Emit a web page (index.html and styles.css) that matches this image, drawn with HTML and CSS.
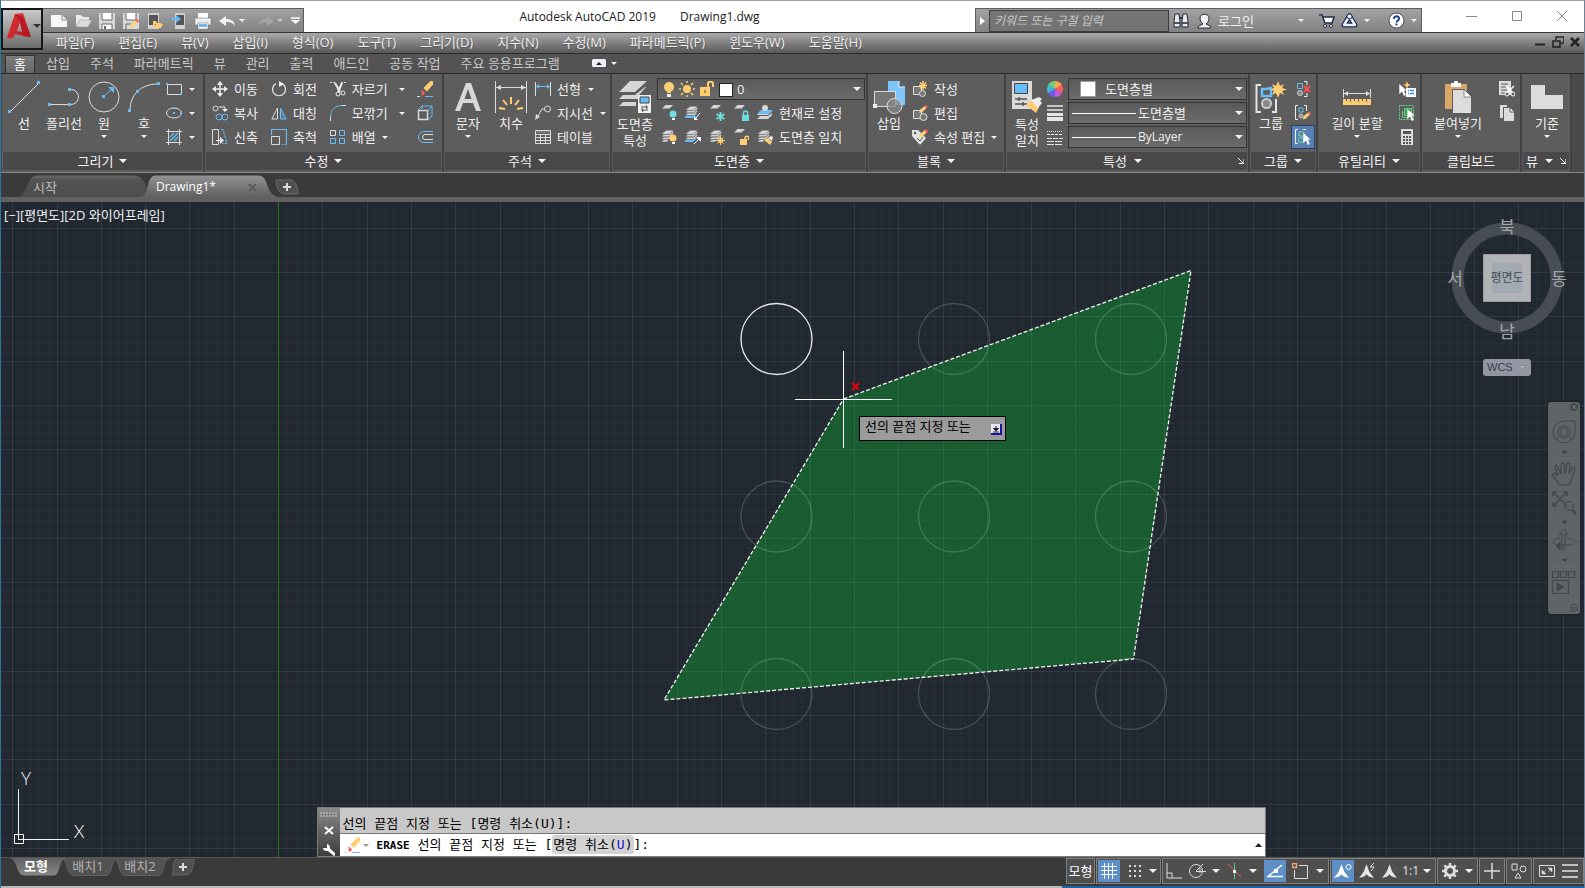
FILE: index.html
```html
<!DOCTYPE html>
<html lang="ko">
<head>
<meta charset="utf-8">
<title>Autodesk AutoCAD 2019 - Drawing1.dwg</title>
<link rel="stylesheet" href="styles.css">
</head>
<body>
<svg class="defs" width="0" height="0" aria-hidden="true">
  <defs>
    <linearGradient id="red" x1="0" y1="0" x2="1" y2="1"><stop offset="0" stop-color="#f0474a"/><stop offset="1" stop-color="#a3121a"/></linearGradient>
    <linearGradient id="tabOff" x1="0" y1="0" x2="0" y2="1"><stop offset="0" stop-color="#686868"/><stop offset=".2" stop-color="#545454"/><stop offset="1" stop-color="#4c4c4c"/></linearGradient>
    <linearGradient id="tabOn" x1="0" y1="0" x2="0" y2="1"><stop offset="0" stop-color="#929292"/><stop offset="1" stop-color="#616161"/></linearGradient>
    <linearGradient id="lowOn" x1="0" y1="0" x2="0" y2="1"><stop offset="0" stop-color="#606060"/><stop offset="1" stop-color="#868686"/></linearGradient>
    <symbol id="pencil" viewBox="0 0 10 10"><path d="M1 9l1-4 5-4 2 2-5 5z" fill="#ffd37a"/><path d="M6 1l2-1 2 2-1 2z" fill="#ff5b5b"/></symbol>
    <symbol id="eraser" viewBox="0 0 16 16"><path d="M13 0h3v4l-7 8-4-4z" fill="#ffce73"/><path d="M3 10l4 4-2 2H3v-4z" fill="#ff5b5b"/></symbol>
    <symbol id="sheet" viewBox="0 0 16 16"><path d="M5 1h10l-5 5H0z" fill="#d6d6d6"/></symbol>
    <symbol id="sheets" viewBox="0 0 16 16"><path d="M6 1h8l-4 4H1z M3 6h7l4-4v2l-4 4H1z M3 9h7l4-4v2l-4 4H1z M3 12h5l-1 2H1z" fill="#d6d6d6"/></symbol>
    <symbol id="cursor" viewBox="0 0 8 13"><path d="M0 0v11l3-3 2 5 2-1-2-5h3z" fill="#fff"/></symbol>
    <symbol id="man" viewBox="0 0 20 20"><path d="M10 0c2 4 2 6 4 10l6 8-7-2-3-3-3 3-7 2 6-8c2-4 2-6 4-10z" fill="currentColor"/></symbol>
  </defs>
</svg>

<header class="titlebar">
  <div class="quick">
    <button class="q" aria-label="새로 만들기"><svg width="16" height="14"><path d="M0 1h11l5 5v7H0z" fill="#f7f7f7"/><path d="M11 1v5h5" fill="none" stroke="#888"/></svg></button>
    <button class="q" aria-label="열기"><svg width="17" height="14"><path d="M1 13V1h5l2 2h6v3" fill="#e9e9e9"/><path d="M1 13l4-7h12l-4 7z" fill="#ddd" stroke="#888" stroke-width=".5"/></svg></button>
    <button class="q" aria-label="저장"><svg width="16" height="16"><path d="M0 0h16v16H0z" fill="#d8d8d8"/><path d="M3 0h10v7H3zM3 11h10v5H3z" fill="#fff"/><path d="M3 0v7h10V0M3 16v-5h10v5" stroke="#666" fill="none"/><path d="M5 13h2v3H5z" fill="#666"/></svg></button>
    <button class="q" aria-label="다른 이름으로 저장"><svg width="16" height="16"><path d="M0 0h16v16H0z" fill="#d8d8d8"/><path d="M3 0h10v7H3z" fill="#fff"/><path d="M3 0v7h10V0M3 16v-5h5" stroke="#666" fill="none"/><use href="#pencil" x="6" y="6" width="10" height="10"/></svg></button>
    <button class="q" aria-label="모바일에서 열기"><svg width="16" height="16"><path d="M1 0h11v16H1z" fill="#d0d0d0"/><path d="M2 2h9v10H2z" fill="#555"/><path d="M7 15l2-4h7l-2 4z M6 15V8h3l1 2h4v1H8z" fill="#ffcd73"/></svg></button>
    <button class="q" aria-label="모바일에 저장"><svg width="16" height="16"><path d="M4 0h10v16H4z" fill="#d0d0d0"/><path d="M5 2h8v10H5z" fill="#555"/><path d="M0 5h5V2l5 4-5 4V7H0z" fill="#67b8f2"/></svg></button>
    <button class="q" aria-label="플롯"><svg width="17" height="16"><path d="M3 0h10v5H3z" fill="#fff"/><path d="M0 5h16v7H0z" fill="#eee" stroke="#666" stroke-width=".5"/><path d="M3 10h10v6H3z" fill="#fff" stroke="#666" stroke-width=".5"/><path d="M4 11h8v3H4z" fill="#6bb9f0"/></svg></button>
    <button class="q" aria-label="명령 취소"><svg width="16" height="12"><path d="M0 6l7-5v3c6 0 8 2 9 7-2-3-4-4-9-4v4z" fill="#f2f2f2"/></svg></button>
    <i class="caret"></i>
    <button class="q redo" aria-label="명령 복구"><svg width="16" height="12"><path d="M16 6L9 1v3C3 4 1 6 0 11c2-3 4-4 9-4v4z" fill="#b4b4b4"/></svg></button>
    <i class="caret faded"></i>
    <button class="custom" aria-label="사용자화"><svg width="9" height="8"><path d="M0 1h9" stroke="#fff" stroke-width="1.5"/><path d="M0 3h9L4.500 7z" fill="#fff"/></svg></button>
  </div>
  <h1 class="title"><span>Autodesk AutoCAD 2019</span><span>Drawing1.dwg</span></h1>
  <div class="info">
    <button class="expand" aria-label="축소"><svg width="5" height="8"><path d="M0 0l5 4-5 4z" fill="#fff"/></svg></button>
    <input class="search" type="text" placeholder="키워드 또는 구절 입력" aria-label="키워드 또는 구절 입력">
    <button aria-label="검색"><svg width="16" height="15"><path d="M2 1h4l1 7v6H1V8z M10 1h4l1 7v6H9V8z" fill="#e8e8e8" stroke="#222a38"/><path d="M6 5h4M1 10h6M9 10h6" stroke="#222a38" stroke-width="1.500"/></svg></button>
    <button class="login"><svg width="16" height="16"><path d="M1 15c0-3 4-3 5-4-2-2-3-3-3-6 0-5 9-5 9 0 0 3-1 4-3 6 1 1 5 1 5 4z" fill="#f2f2f2" stroke="#222a38"/></svg><span>로그인</span><i class="caret"></i></button>
    <button aria-label="앱 스토어"><svg width="17" height="16"><path d="M1 2h3l3 8h7l2-6H5" fill="#fff" stroke="#1f2c4c" stroke-width="1.500"/><circle cx="7" cy="13" r="1.500" fill="#fff" stroke="#1f2c4c"/><circle cx="13" cy="13" r="1.500" fill="#fff" stroke="#1f2c4c"/></svg></button>
    <button aria-label="연결 유지"><svg width="17" height="15"><path d="M8.500 3L3 12h11z" fill="none" stroke="#1f2c4c" stroke-width="5" stroke-linejoin="round"/><path d="M8.500 3L3 12h11z" fill="none" stroke="#e8ecf4" stroke-width="2.500" stroke-linejoin="round"/><circle cx="8.500" cy="3.500" r="2.500" fill="#e8ecf4" stroke="#1f2c4c"/></svg></button>
    <i class="caret"></i>
    <button class="help" aria-label="도움말"><svg width="17" height="17"><circle cx="8.500" cy="8.500" r="7.500" fill="#fff" stroke="#4a4a4a"/><path d="M6 7c0-4 5.500-3.500 5 0-.3 1.700-2.500 1.500-2.500 3.500M8.500 11.500v2" fill="none" stroke="#1b3d99" stroke-width="2"/></svg></button>
    <i class="caret"></i>
  </div>
  <div class="winctl">
    <button aria-label="최소화"><svg width="12" height="12"><path d="M0 6.500h11" stroke="#888"/></svg></button>
    <button aria-label="최대화"><svg width="12" height="12"><path d="M1.500 1.500h9v9h-9z" stroke="#888" fill="none"/></svg></button>
    <button aria-label="닫기"><svg width="12" height="12"><path d="M1 1l10 10M11 1L1 11" stroke="#888"/></svg></button>
  </div>
</header>
<button class="appbtn" aria-label="응용프로그램 메뉴"><svg width="24" height="28"><path d="M8 2l8-1 8 24-8-1-3-14-3 9 6 1 1 4-9-2-2 4-6 1z" fill="url(#red)"/><path d="M8 2L0 26l6 0 7-17z" fill="#cf2a2f"/><path d="M8 2l5 7 3 15 7 1-7-20z" fill="#b9181f"/></svg><i class="caret dark"></i></button>

<nav class="menubar">
  <a href="#">파일(F)</a><a href="#">편집(E)</a><a href="#">뷰(V)</a><a href="#">삽입(I)</a><a href="#">형식(O)</a><a href="#">도구(T)</a><a href="#">그리기(D)</a><a href="#">치수(N)</a><a href="#">수정(M)</a><a href="#">파라메트릭(P)</a><a href="#">윈도우(W)</a><a href="#">도움말(H)</a>
  <div class="docctl">
    <button aria-label="도면 최소화"><svg width="12" height="12"><path d="M1 8.500h10" stroke="#222" stroke-width="2"/></svg></button>
    <button aria-label="도면 복원"><svg width="12" height="12"><path d="M4 4V1h8v6H9" fill="none" stroke="#222" stroke-width="1.500"/><path d="M1 5h7v6H1z" fill="none" stroke="#222" stroke-width="1.500"/></svg></button>
    <button aria-label="도면 닫기"><svg width="10" height="10"><path d="M1 1l8 8M9 1L1 9" stroke="#222" stroke-width="2.500"/></svg></button>
  </div>
</nav>

<nav class="tabs">
  <button class="on">홈</button><button>삽입</button><button>주석</button><button>파라메트릭</button><button>뷰</button><button>관리</button><button>출력</button><button>애드인</button><button>공동 작업</button><button>주요 응용프로그램</button>
  <button class="mini" aria-label="리본 최소화"><svg width="14" height="8"><rect width="14" height="8" rx="1.500" fill="#eef1f6"/><path d="M4 6l3-3 3 3z" fill="#222"/></svg><i class="caret"></i></button>
</nav>

<main class="ribbon">
  <section class="panel p-draw">
    <div class="body">
      <button class="big"><svg width="32" height="34"><path d="M2 31L31 2" stroke="#dcdcdc"/><path d="M0 29h3v3H0zM29 0h3v3h-3z" fill="#67bdf7"/></svg>선</button>
      <button class="big"><svg width="34" height="34"><path d="M2 23.500h20M22 8.500h2a7.500 7.500 0 0 1 0 15h-2" stroke="#dcdcdc" fill="none"/><path d="M1 22h3v3H1zM21 7h3v3h-3zM21 22h3v3h-3z" fill="#67bdf7"/></svg>폴리선</button>
      <button class="big"><svg width="32" height="34"><circle cx="16" cy="16" r="15" stroke="#dcdcdc" fill="none"/><path d="M14 14h3v3h-3zM20 6h6v6z" fill="#67bdf7"/><path d="M16 15l8-7" stroke="#67bdf7"/></svg>원<i class="caret"></i></button>
      <button class="big"><svg width="32" height="34"><path d="M2 30C2 14 12 3 30 3" stroke="#dcdcdc" fill="none"/><path d="M0 28h3v3H0zM29 1h3v3h-3zM8 9h3v3H8z" fill="#67bdf7"/></svg>호<i class="caret"></i></button>
      <div class="stack">
        <button aria-label="직사각형"><svg width="16" height="16"><path d="M1.500 3.500h14v10h-14z" stroke="#dcdcdc" fill="none"/><path d="M0 2h2v2H0zM14 12h2v2h-2z" fill="#67bdf7"/></svg><i class="caret"></i></button>
        <button aria-label="타원"><svg width="16" height="16"><ellipse cx="8" cy="8" rx="7.500" ry="5" stroke="#dcdcdc" fill="none"/><path d="M7 2h2v2H7zM7 7h2v2H7zM14 7h2v2h-2z" fill="#67bdf7"/></svg><i class="caret"></i></button>
        <button aria-label="해치"><svg width="16" height="16"><path d="M0 2.500h16M0 13.500h16M2.500 0v16M13.500 0v16" stroke="#dcdcdc"/><path d="M4 8l4-4M4 12l8-8M8 12l4-4" stroke="#67bdf7" stroke-width="1.500"/></svg><i class="caret"></i></button>
      </div>
    </div>
    <button class="plabel">그리기<i class="caret wide"></i></button>
  </section>

  <section class="panel p-modify">
    <div class="body">
      <div class="stack">
        <button><svg width="16" height="16"><path d="M8 1v14M1 8h14" stroke="#eee" stroke-width="1.500"/><path d="M8 0l3 4H5zM8 16l3-4H5zM0 8l4-3v6zM16 8l-4-3v6z" fill="#eee"/></svg>이동</button>
        <button><svg width="16" height="16"><circle cx="3.500" cy="3.500" r="2.500" stroke="#dcdcdc" fill="none"/><path d="M7 2h6v3" stroke="#eee" fill="none"/><path d="M10 4h6l-3 3z" fill="#eee"/><circle cx="7" cy="12" r="3" stroke="#67bdf7" fill="none"/><circle cx="13" cy="12" r="3" stroke="#67bdf7" fill="none"/></svg>복사</button>
        <button><svg width="16" height="16"><path d="M.5 .5h6v15h-6z" stroke="#dcdcdc" fill="none"/><path d="M4 11.500h5" stroke="#eee"/><path d="M8 8l4 3.500L8 15z" fill="#eee"/><path d="M9 .5l2 0 4 14h-5" stroke="#67bdf7" fill="none" stroke-dasharray="3 1"/></svg>신축</button>
      </div>
      <div class="stack">
        <button><svg width="16" height="16"><path d="M5 2.500a6.500 6.500 0 1 0 6 0" stroke="#eee" fill="none" stroke-width="1.200"/><path d="M8 0l5 3-5 3z" fill="#eee"/></svg>회전</button>
        <button><svg width="16" height="16"><path d="M6.500 3v11H.8z" stroke="#dcdcdc" fill="none"/><path d="M9.500 3v11h5.700z" stroke="#67bdf7" fill="#67bdf755"/></svg>대칭</button>
        <button><svg width="16" height="16"><path d="M0 .5h15.500V16H10M.5 0v6" stroke="#67bdf7" fill="none" stroke-width="1.200"/><path d="M.5 7.500h8v8h-8z" stroke="#dcdcdc" fill="none"/></svg>축척</button>
      </div>
      <div class="stack grow">
        <button><svg width="16" height="16"><path d="M0 1.500h6M11 1.500h5" stroke="#dcdcdc" stroke-dasharray="2 1"/><path d="M5 2l5 9M12 2l-4 9" stroke="#eee" stroke-width="2"/><circle cx="8" cy="13" r="2" stroke="#eee" fill="none"/><circle cx="13" cy="12" r="2" stroke="#eee" fill="none"/></svg>자르기<i class="caret push"></i></button>
        <button><svg width="16" height="16"><path d="M.5 16v-4M12 .5h4" stroke="#dcdcdc"/><path d="M.5 12C.5 5 5 .5 12 .5" stroke="#67bdf7" fill="none"/></svg>모깎기<i class="caret push"></i></button>
        <button><svg width="16" height="16"><path d="M.500 1.500h5v5h-5z" stroke="#dcdcdc" fill="none"/><path d="M9.500 1.500h5v5h-5zM.500 9.500h5v5h-5zM9.500 9.500h5v5h-5z" stroke="#67bdf7" fill="none"/></svg>배열<i class="caret"></i></button>
      </div>
      <div class="stack">
        <button aria-label="지우기"><svg width="17" height="16"><use href="#eraser" x="2" width="14" height="14"/><path d="M0 15.500h3" stroke="#ddd"/><path d="M8 15.500h8" stroke="#67bdf7"/></svg></button>
        <button aria-label="분해"><svg width="16" height="16"><path d="M1.500 5.500h9v9h-9z" stroke="#dcdcdc" fill="none" stroke-width="1.500"/><path d="M1 5l4-4h10v10l-4 4M5 1v3M11 5l4-4M11 5v5" stroke="#67bdf7" fill="none"/></svg></button>
        <button aria-label="간격띄우기"><svg width="16" height="16"><path d="M16 2.500H7a5 5 0 0 0 0 11h9" stroke="#67bdf7" fill="none"/><path d="M16 5.500H8a2.500 2.500 0 0 0 0 5h8" stroke="#dcdcdc" fill="none"/></svg></button>
      </div>
    </div>
    <button class="plabel">수정<i class="caret wide"></i></button>
  </section>

  <section class="panel p-annot">
    <div class="body">
      <button class="big"><svg width="26" height="34"><path d="M0 30L11 2h5l10 28h-5l-3-8H8l-3 8zM9.500 18h7L13 8z" fill="#d8d8d8"/></svg>문자<i class="caret"></i></button>
      <button class="big"><svg width="32" height="34"><path d="M.5 0v32M31.500 0v32M1 6.500h30" stroke="#dcdcdc"/><path d="M1 6.500l5-2.500v5zM31 6.500L26 4v5z" fill="#dcdcdc"/><path d="M16 16v7M8 19l4 5M24 19l-4 5M4 27l6 1M28 27l-6 1" stroke="#ffce73" stroke-width="2"/></svg>치수</button>
      <div class="stack">
        <button><svg width="16" height="16"><path d="M.5 1v14M15.500 1v14" stroke="#dcdcdc"/><path d="M2 5.500h12" stroke="#67bdf7"/><path d="M1 5.500L4 3v5zM15 5.500L12 3v5z" fill="#67bdf7"/></svg>선형<i class="caret"></i></button>
        <button><svg width="16" height="16"><circle cx="12.500" cy="4" r="3" stroke="#dcdcdc" fill="none"/><path d="M10 4H7l-5 9" stroke="#dcdcdc" fill="none"/><path d="M0 15l1-6 4 3z" fill="#dcdcdc"/></svg>지시선<i class="caret"></i></button>
        <button><svg width="16" height="16"><path d="M.5 1.500h15v13H.5zM0 5.500h16M0 8.500h16M0 11.500h16M5.500 5v10M10.500 5v10" stroke="#dcdcdc" fill="none"/><path d="M1 2h14v2H1z" fill="#777"/></svg>테이블</button>
      </div>
    </div>
    <button class="plabel">주석<i class="caret wide"></i></button>
  </section>

  <section class="panel p-layer">
    <div class="body">
      <button class="big tight"><svg width="33" height="34"><path d="M11 0h17L16 11H0z M4 14h12l10-8h1l-7 8v4H0z M4 21h13v4H0z" fill="#d6d6d6"/><path d="M19 14h13v18H19z" fill="#eee"/><path d="M21 16h9v6h-9z" fill="#67bdf7" stroke="#444"/><path d="M22 26h7M22 29h7M27 24l1 4M23 27l1 4" stroke="#555"/></svg>도면층<br>특성</button>
      <div class="stack grow">
        <div class="combo layer">
          <svg width="12" height="16"><circle cx="6" cy="6" r="5" fill="#ffce73"/><path d="M4 10h4v2H4z" fill="#ffce73"/><path d="M4 13h4v3H4z" fill="#eee"/></svg>
          <svg width="16" height="16"><circle cx="8" cy="8" r="4" fill="#ffce73"/><path d="M8 0v2M8 14v2M0 8h2M14 8h2M2 2l2 2M12 12l2 2M14 2l-2 2M2 14l2-2" stroke="#ffce73" stroke-width="1.500"/></svg>
          <svg width="16" height="16"><path d="M1 6h10v9H1z" fill="#ffce73"/><path d="M9 6V3a2.500 2.500 0 0 1 5 0v3" stroke="#ffce73" stroke-width="2" fill="none"/><path d="M6 9v3" stroke="#554"/></svg>
          <span class="swatch line"></span>
          <select aria-label="도면층"><option>0</option></select><i class="caret wide"></i>
        </div>
        <div class="row">
          <button aria-label="끄기"><svg width="16" height="16"><use href="#sheet" width="14" height="12" y="-1"/><circle cx="12" cy="9" r="3.500" fill="#6bdde0"/><path d="M11 13h3v2h-3z" fill="#eee"/></svg></button>
          <button aria-label="분리"><svg width="16" height="16"><use href="#sheets" width="14" height="15"/><path d="M0 11h8l1-2h3l-4 4H0z" fill="#67bdf7"/><path d="M15 8l-5 6" stroke="#fff"/><path d="M9 15v-4l4 4z" fill="#fff"/></svg></button>
          <button aria-label="동결"><svg width="16" height="16"><use href="#sheet" width="14" height="12" y="-1"/><path d="M11.500 7v9M7.500 9l8 5M15.500 9l-8 5" stroke="#6bdde0" stroke-width="2"/></svg></button>
          <button aria-label="잠금"><svg width="16" height="16"><use href="#sheet" width="14" height="12" y="-1"/><path d="M9 10h7v6H9z" fill="#6bdde0"/><path d="M10.500 10V8a2 2 0 0 1 4 0v2" stroke="#6bdde0" fill="none" stroke-width="1.500"/></svg></button>
          <button><svg width="16" height="16"><path d="M3 6h12l-4 4H0zM3 11h8l4-3v2l-4 4H0z" fill="#d6d6d6"/><path d="M4 5h12l-4 4H1z" fill="#67bdf7"/><circle cx="8" cy="3" r="3" fill="#d6d6d6"/></svg>현재로 설정</button>
        </div>
        <div class="row">
          <button aria-label="모두 켜기"><svg width="16" height="16"><use href="#sheets" width="14" height="15"/><circle cx="12" cy="9" r="3.500" fill="#ffce73"/><path d="M11 13h3v2h-3z" fill="#eee"/></svg></button>
          <button aria-label="분리 해제"><svg width="16" height="16"><use href="#sheets" width="14" height="15"/><path d="M0 11h8l1-2h3l-4 4H0z" fill="#67bdf7"/><path d="M9 15l5-5" stroke="#fff"/><path d="M16 8v5l-5-5z" fill="#fff"/></svg></button>
          <button aria-label="모두 동결 해제"><svg width="16" height="16"><use href="#sheets" width="14" height="15"/><circle cx="11.500" cy="11.500" r="2.500" fill="#ffce73"/><path d="M11.500 7v9M7 11.500h9M8.500 8.500l6 6M14.500 8.500l-6 6" stroke="#ffce73"/></svg></button>
          <button aria-label="잠금 해제"><svg width="16" height="16"><use href="#sheet" width="14" height="12" y="-1"/><path d="M7 10h7v6H7z" fill="#ffce73"/><path d="M12 10V9a1.500 1.500 0 0 1 3.500 0v2" stroke="#ffce73" fill="none" stroke-width="1.500"/></svg></button>
          <button><svg width="16" height="16"><use href="#sheets" width="14" height="15"/><path d="M7 11l4-2 4 4-2 3z" fill="#ffce73"/><path d="M11 9l3-2 2 1-1 4z" fill="#eee"/></svg>도면층 일치</button>
        </div>
      </div>
    </div>
    <button class="plabel">도면층<i class="caret wide"></i></button>
  </section>

  <section class="panel p-block">
    <div class="body">
      <button class="big"><svg width="32" height="34"><path d="M15 0h11l6 6v18H15z" fill="#7cc6fb"/><path d="M26 0v6h6" fill="#5d5d5d" stroke="#dcefff"/><path d="M1.500 10.500h21v15h-21z" fill="#777" stroke="#dcdcdc"/><circle cx="21.500" cy="25" r="7.500" fill="#888b" stroke="#dcdcdc"/><path d="M0 23h4v4H0z" fill="#eee"/></svg>삽입</button>
      <div class="stack">
        <button><svg width="16" height="16"><path d="M1.500 5.500h8v8h-8z" fill="#777" stroke="#dcdcdc"/><circle cx="10.500" cy="12.500" r="3" fill="#777" stroke="#dcdcdc"/><path d="M11 0v9M7 4.500h8M8 1.500l6 6M14 1.500l-6 6" stroke="#ffce73" stroke-width="1.500"/></svg>작성</button>
        <button><svg width="16" height="16"><path d="M1.500 5.500h8v8h-8z" fill="#777" stroke="#dcdcdc"/><circle cx="11.500" cy="12" r="3.500" fill="#777" stroke="#dcdcdc"/><use href="#pencil" x="6" y="0" width="10" height="9"/></svg>편집</button>
        <button><svg width="16" height="16"><path d="M0 1h6l8 8-6 7-8-9z" fill="#e2e2e2"/><circle cx="3" cy="4" r="1.200" fill="#555"/><path d="M5 9l3 3 3-4" stroke="#555" fill="none"/><use href="#pencil" x="6" y="0" width="10" height="10"/></svg>속성 편집<i class="caret"></i></button>
      </div>
    </div>
    <button class="plabel">블록<i class="caret wide"></i></button>
  </section>

  <section class="panel p-prop">
    <div class="body">
      <button class="big tight"><svg width="31" height="34"><path d="M0 0h20v28H0z" fill="#dadada"/><path d="M2.500 2.500h13v10h-13z" fill="#67bdf7" stroke="#444"/><path d="M3 18h12M3 23h12M7 16v4M11 21v4" stroke="#555" stroke-width="1.500"/><path d="M14 24l6-5 7 7-3 6z" fill="#ffce73"/><path d="M19 19l3-1 5-2 3 2-2 2 2 2-4 5z" fill="#eee"/></svg>특성<br>일치</button>
      <div class="stack icons">
        <button aria-label="색상"><svg width="16" height="16"><path d="M8 8V0a8 8 0 0 1 6.900 4z" fill="#ffa64a"/><path d="M8 8l6.900-4a8 8 0 0 1 0 8z" fill="#ff5b5b"/><path d="M8 8l6.900 4A8 8 0 0 1 8 16z" fill="#c65bd8"/><path d="M8 8v8a8 8 0 0 1-6.900-4z" fill="#6a5be8"/><path d="M8 8l-6.900 4a8 8 0 0 1 0-8z" fill="#3db6e0"/><path d="M8 8L1.100 4A8 8 0 0 1 8 0z" fill="#6bd07a"/></svg></button>
        <button aria-label="선가중치"><svg width="16" height="16"><path d="M0 1h16M0 5h16" stroke="#e6e6e6" stroke-width="1.500"/><path d="M0 9.500h16" stroke="#e6e6e6" stroke-width="3"/><path d="M0 14h16" stroke="#e6e6e6" stroke-width="4"/></svg></button>
        <button aria-label="선종류"><svg width="16" height="16"><path d="M0 2.500h16" stroke="#e6e6e6" stroke-dasharray="1 1"/><path d="M0 5.500h16" stroke="#e6e6e6" stroke-dasharray="3 1"/><path d="M0 9.500h16" stroke="#e6e6e6" stroke-dasharray="5 1"/><path d="M0 12.500h16M0 15.500h16" stroke="#e6e6e6" stroke-dasharray="7 1"/></svg></button>
      </div>
      <div class="stack grow">
        <div class="combo prop"><span class="swatch big-sw"></span><select aria-label="색상"><option>도면층별</option></select><i class="caret wide"></i></div>
        <div class="combo prop"><span class="rule"></span><select aria-label="선가중치"><option>도면층별</option></select><i class="caret wide"></i></div>
        <div class="combo prop small"><span class="rule"></span><select aria-label="선종류"><option>ByLayer</option></select><i class="caret wide"></i></div>
      </div>
    </div>
    <div class="plabel"><button class="bare">특성<i class="caret wide"></i></button><button class="bare launch" aria-label="특성 대화상자"><svg width="6" height="6"><path d="M0 0l5 5M1 5.500h5V1" stroke="#fff" fill="none"/></svg></button></div>
  </section>

  <section class="panel p-group">
    <div class="body">
      <button class="big"><svg width="33" height="34"><path d="M6 4H1.500v27H6M17 31h4V18" stroke="#e4e4e4" stroke-width="2" fill="none"/><path d="M7 15V8h5l4-1v8z" fill="none" stroke="#67bdf7" stroke-width="2.500"/><circle cx="11.500" cy="22.500" r="4.500" fill="#888" stroke="#ccc" stroke-width="2"/><path d="M23 0l2 5 4-2-2 4 5 1.500-5 1.500 2 4-4-2-2 5-2-5-4 2 2-4-4-1.500 4-1.500-2-4 4 2z" fill="#ffce73"/></svg>그룹</button>
      <div class="stack">
        <button aria-label="그룹 해제"><svg width="16" height="16"><path d="M2.500 2.500h5v5h-5z" stroke="#67bdf7" fill="none"/><circle cx="5" cy="12" r="2.500" stroke="#ccc" fill="#888"/><path d="M9 .5h3V4M12 12v3.500H9" stroke="#eee" fill="none"/><path d="M9 5l6 6M15 5l-6 6" stroke="#ff4d55" stroke-width="2"/></svg></button>
        <button aria-label="그룹 편집"><svg width="16" height="16"><path d="M3 .5H.5v14H3M9 .5h2.500V6" stroke="#eee" fill="none"/><path d="M4 3h4v4H4z" stroke="#67bdf7" fill="none"/><circle cx="6" cy="11" r="2" stroke="#ccc" fill="#888"/><use href="#pencil" x="7" y="6" width="9" height="10"/></svg></button>
        <button class="pressed" aria-label="그룹 선택 켜기"><svg width="16" height="16"><path d="M3 .5H.5v14H3M8 .5h3" stroke="#eee" fill="none"/><path d="M4 3h5v4H4z" stroke="#6bd88a" fill="none"/><circle cx="6" cy="11" r="2.500" stroke="#6bd88a" fill="none"/><use href="#cursor" x="8" y="4" width="8" height="12"/></svg></button>
      </div>
    </div>
    <button class="plabel">그룹<i class="caret wide"></i></button>
  </section>

  <section class="panel p-util">
    <div class="body">
      <button class="big"><svg width="30" height="34"><path d="M1.500 8v9M28.500 8v9M2 12.500h26" stroke="#dcdcdc"/><path d="M2 12.500l4-2.500v5zM28 12.500L24 10v5z" fill="#dcdcdc"/><path d="M1 18h28v6H1z" fill="#ffce73"/><path d="M4.500 18v2M8.500 18v3M12.500 18v2M16.500 18v3M20.500 18v2M24.500 18v3" stroke="#5d5d5d"/></svg>길이 분할<i class="caret"></i></button>
      <div class="stack">
        <button aria-label="신속 선택"><svg width="17" height="16"><use href="#cursor" y="3" width="8" height="12"/><path d="M8 0l1 3 3 1-3 1-1 3-1-3-3-1 3-1z" fill="#ffce73"/><path d="M7 7h10v9H7z" fill="#fff"/><path d="M9 9.500h1M9 12.500h1M11 9.500h4M11 12.500h4" stroke="#2f8fe0" stroke-width="1.500"/></svg></button>
        <button aria-label="모두 선택"><svg width="16" height="16"><path d="M.5 .5h14v14H.500z" fill="none" stroke="#5fd483" stroke-dasharray="2 1"/><path d="M5.500 3.500h7v7h-7z" fill="#3f9d5c" stroke="#5fd483"/><path d="M3.500 6v6.500H10" stroke="#5fd483" fill="none"/><use href="#cursor" x="8" y="4" width="8" height="12"/></svg></button>
        <button aria-label="계산기"><svg width="16" height="16"><path d="M2 0h12v16H2z" fill="#dcdcdc"/><path d="M4 2h8v3H4z" fill="#555"/><path d="M4 8h8M4 11h8M4 14h8" stroke="#555" stroke-width="2" stroke-dasharray="2 1"/></svg></button>
      </div>
    </div>
    <button class="plabel">유틸리티<i class="caret wide"></i></button>
  </section>

  <section class="panel p-clip">
    <div class="body">
      <button class="big"><svg width="26" height="34"><path d="M0 3h22v25H0z" fill="#d9a868"/><path d="M6 2h3V0h4v2h3v4H6z" fill="#fff"/><path d="M7.500 8.500h12l7 7v17h-19z" fill="#dcdcdc" stroke="#5d5d5d"/><path d="M19 9v7h7" fill="#fff" stroke="#888"/></svg>붙여넣기<i class="caret"></i></button>
      <div class="stack">
        <button aria-label="잘라내기"><svg width="16" height="16"><path d="M0 0h12v14H0z" fill="#dcdcdc"/><path d="M2 3h7M2 6h5M2 9h6M2 12h4" stroke="#555"/><path d="M7 5l7 7M15 5l-7 7" stroke="#fff" stroke-width="1.500"/><circle cx="8" cy="13" r="2" stroke="#fff" fill="#5d5d5d"/><circle cx="14" cy="13" r="2" stroke="#fff" fill="#5d5d5d"/></svg></button>
        <button aria-label="복사"><svg width="16" height="16"><path d="M1 0h7v2H4v11H1z" fill="#dcdcdc"/><path d="M5 3h6l4 4v9H5z" fill="#dcdcdc"/><path d="M11 3v4h4" stroke="#555" fill="#fff"/></svg></button>
      </div>
    </div>
    <div class="plabel">클립보드</div>
  </section>

  <section class="panel p-view">
    <div class="body">
      <button class="big"><svg width="32" height="34"><path d="M0 4h14v10h18v14H0z" fill="#dcdcdc"/></svg>기준<i class="caret"></i></button>
    </div>
    <div class="plabel"><button class="bare">뷰<i class="caret wide"></i></button><button class="bare launch" aria-label="뷰 대화상자"><svg width="6" height="6"><path d="M0 0l5 5M1 5.500h5V1" stroke="#fff" fill="none"/></svg></button></div>
  </section>
</main>

<nav class="files">
  <button class="ftab"><svg class="shape" width="134" height="22"><path d="M0 22C10 20 8 0 20 .5h96c12 0 12 16 18 21.500z" fill="url(#tabOff)"/></svg><span>시작</span></button>
  <button class="ftab on"><svg class="shape" width="136" height="22"><path d="M0 22C8 18 4 0 14 .5h102c12 0 6 18 20 21.500z" fill="url(#tabOn)"/></svg><span>Drawing1*</span><svg width="9" height="9"><path d="M1 1l7 7M8 1L1 8" stroke="#5a5a5a" stroke-width="2"/></svg></button>
  <button class="fadd" aria-label="새 도면"><svg width="24" height="16"><path d="M1 1h14c6 0 8 8 8 14H10C3 15 1 6 1 1z" fill="#505050" stroke="#6a6a6a"/><path d="M12 4v8M8 8h8" stroke="#ddd" stroke-width="2"/></svg></button>
</nav>

<div class="canvas">
  <svg class="drawing" id="drawing" width="100%" height="100%">
    <path class="sel" d="M843.500 197L1191 68.500 1133.500 457 664 498z"/>
    <path id="minor"/><path id="major"/>
    <path class="axis" d="M278.500 0V655"/>
    <g class="ghost"><circle cx="954" cy="137" r="35.500"/><circle cx="1131" cy="137" r="35.500"/><circle cx="776.500" cy="314.500" r="35.500"/><circle cx="954" cy="314.500" r="35.500"/><circle cx="1131" cy="314.500" r="35.500"/><circle cx="776.500" cy="492" r="35.500"/><circle cx="954" cy="492" r="35.500"/><circle cx="1131" cy="492" r="35.500"/></g>
    <circle cx="776.500" cy="137" r="35.500" fill="none" stroke="#e8e8e8" stroke-width="1.300"/>
    <path class="dash" d="M843.500 197L1191 68.500 1133.500 457 664 498z"/>
    <path d="M795 197.500h97M843.500 149v97" stroke="#fff"/>
    <path d="M852 181l7 7M859 181l-7 7" stroke="#f00000" stroke-width="1.800"/>
    <g class="ucs"><path d="M14.500 632.500h9v9h-9zM18.500 587v50M18 637.500h51"/><text x="21" y="583">Y</text><text x="74" y="636">X</text></g>
  </svg>
  <button class="vplabel">[−][평면도][2D 와이어프레임]</button>
  <div class="dyn"><span>선의 끝점 지정 또는</span><svg width="11" height="11"><path d="M0 0h11v11H0z" fill="#e8e8f4"/><path d="M10 0v11M0 10h11" stroke="#1515a8" stroke-width="2"/><path d="M5 2v3M2.500 4.500h5L5 7zM2 8h6" stroke="#222" fill="#222"/></svg></div>
  <svg class="cube" width="126" height="126" role="img" aria-label="뷰큐브">
    <circle cx="63" cy="63" r="49.500" fill="none" stroke="#484d55" stroke-width="12"/>
    <path d="M39.500 39.500h47v47h-47z" fill="#b1b3b6" stroke="#9b9da1"/><path d="M48 48h30v30H48z" fill="#a3a9b2"/>
    <text class="face" x="63" y="67">평면도</text>
    <text x="63" y="18">북</text><text x="63" y="123">남</text><text x="11" y="70">서</text><text x="115" y="70">동</text>
  </svg>
  <button class="wcs">WCS<svg width="9" height="6"><path d="M1 .5h7L4.500 5z" fill="#b4b6c2" stroke="#777a88" stroke-width=".7"/></svg></button>
  <div class="navbar">
    <svg width="32" height="212" fill="none" stroke="#42474e">
      <circle cx="26" cy="5" r="3.500" fill="#474b50"/><path d="M24 3l4 4M28 3l-4 4" stroke="#74787b"/>
      <path d="M16 19h11v11a11 11 0 1 1-11-11z"/><circle cx="16" cy="30" r="6"/><circle cx="16" cy="30" r="4"/><path d="M11 34l-3 4M21 34l3 4"/>
      <path d="M14 49h5l-2.500 3z" fill="#42474e"/><path d="M3 56.500h26" stroke="#666a6e"/>
      <path d="M11 83c-2-5-5-8-7-10 2-3 4-1 6 1L7 65c1-3 3-1 3 1l3 6V62c1-2 3-1 3 1l1 8 2-9c1-2 3-1 3 1l-1 9 3-6c1-2 3-1 3 1l-3 9c-1 4-2 5-3 7z" stroke-width="1.200"/>
      <path d="M5 90l14 14M19 90L5 104M5 94v-4h4M15 90h4v4M5 100v4h4" stroke-width="1.500"/><circle cx="21" cy="104" r="4.500"/><path d="M24 108l4 4" stroke-width="2.500"/>
      <path d="M14 119h5l-2.500 3z" fill="#42474e"/>
      <path d="M14 148v-16h-3l4.500-5 4.500 5h-3v16zM12 136c-10 2-10 7 3 7h7c8-2 5-6-3-7"/><path d="M8 144l4-4v8z" fill="#42474e"/>
      <path d="M14 157h5l-2.500 3z" fill="#42474e"/><path d="M3 164.500h26" stroke="#666a6e"/>
      <path d="M4.500 169.500h6v6h-6zM12.500 169.500h6v6h-6zM20.500 169.500h6v6h-6zM4.500 178.500h16v13h-16z" stroke-width="1.200"/><path d="M9 181v8l7-4z" fill="#42474e"/>
      <circle cx="26" cy="206" r="3.500"/><path d="M24 206h4"/>
    </svg>
  </div>
  <div class="cmd">
    <div class="grip">
      <svg width="18" height="5"><path d="M0 1h18M0 4h18" stroke="#a8a8a8" stroke-width="2" stroke-dasharray="2 1"/></svg>
      <button aria-label="닫기"><svg width="10" height="9"><path d="M1 1l8 7M9 1L1 8" stroke="#fff" stroke-width="2"/></svg></button>
      <button aria-label="사용자화"><svg width="12" height="12"><path d="M4 4l8 7" stroke="#fff" stroke-width="3"/><path d="M4 0v4H0c0 3 4 4 6 2s1-5-2-6z" fill="#fff"/></svg></button>
    </div>
    <div class="lines">
      <p class="hist">선의 끝점 지정 또는 [명령 취소(U)]:</p>
      <div class="entry"><svg width="17" height="16"><use href="#eraser" x="2" width="14" height="15"/><path d="M0 15.500h3" stroke="#ddd"/><path d="M8 15.500h8" stroke="#67bdf7"/></svg><i class="caret gray"></i><label for="cmdin"><b>ERASE</b> 선의 끝점 지정 또는 [<span class="opt">명령 취소(<em>U</em>)</span>]:</label><input id="cmdin" type="text"><button class="up" aria-label="최근 명령"><svg width="7" height="4"><path d="M0 4h7L3.500 0z" fill="#222"/></svg></button></div>
    </div>
  </div>
</div>

<footer class="bottom">
  <nav class="layouts">
    <button class="on"><svg class="shape" width="56" height="18"><path d="M0 0h56c-8 2-5 17-12 17.500H14C6 17 8 3 0 0z" fill="url(#lowOn)"/></svg><span>모형</span></button>
    <button><svg class="shape" width="56" height="18"><path d="M0 0h56c-8 2-5 17-12 17.500H12C4 17 6 3 0 0z" fill="#525252" stroke="#626262"/></svg><span>배치1</span></button>
    <button><svg class="shape" width="56" height="18"><path d="M0 0h56c-8 2-5 17-12 17.500H12C4 17 6 3 0 0z" fill="#525252" stroke="#626262"/></svg><span>배치2</span></button>
    <button class="ladd" aria-label="새 배치"><svg width="24" height="17"><path d="M5 0h18c-1 8-2 16-9 16H1C3 12 1 4 5 0z" fill="#505050" stroke="#666"/><path d="M12 4v8M8 8h8" stroke="#ddd" stroke-width="2"/></svg></button>
  </nav>
  <div class="status">
    <div class="sg g1"><button>모형</button></div>
    <div class="sg g2"><button class="act" aria-label="그리드"><svg width="16" height="16"><path d="M3.500 0v16M7.500 0v16M11.500 0v16M0 3.500h16M0 7.500h16M0 11.500h16" stroke="#fff"/></svg></button><button aria-label="스냅"><svg width="14" height="14"><path d="M1 2h14M1 7h14M1 12h14" stroke="#ddd" stroke-width="2" stroke-dasharray="2 3"/></svg></button><i class="caret wide"></i></div>
    <div class="sg g3"><button aria-label="직교"><svg width="16" height="16"><path d="M1 0v15h15M1 10h5v5" stroke="#ddd" fill="none"/></svg></button><button aria-label="극좌표"><svg width="17" height="16"><circle cx="7" cy="8" r="6.500" stroke="#ddd" fill="none"/><path d="M7 8.500h10M7 8l7-7M11 5v5" stroke="#ddd"/></svg></button><i class="caret wide"></i><button aria-label="등각투영"><svg width="15" height="16"><path d="M1 1l13 13" stroke="#e05a60"/><path d="M7.500 0v16" stroke="#5fd483"/><path d="M6 7h3v3H6z" fill="#eee"/></svg></button><i class="caret wide"></i><button class="act" aria-label="객체 스냅 추적"><svg width="16" height="14"><path d="M15 1L1 12.500h15" stroke="#fff" fill="none" stroke-width="1.500"/><path d="M7 5h4v4H7z" fill="#fff"/></svg></button><button aria-label="객체 스냅"><svg width="17" height="16"><path d="M7 2.500h8.500v13H2.500V7" stroke="#ddd" fill="none"/><path d="M.5 .5h4v4h-4z" stroke="#f0a37a" fill="none" stroke-width="1.500"/></svg></button><i class="caret wide"></i></div>
    <div class="sg g4"><button class="act" aria-label="주석 가시성"><svg width="18" height="17"><use href="#man" y="1" width="15" height="16"/><circle cx="14.500" cy="4" r="2.500" stroke="#fff" fill="none"/></svg></button><button aria-label="자동 축척"><svg width="17" height="17"><use href="#man" y="1" width="15" height="16"/><path d="M15 0l-4 4h4l-3 4" stroke="#ddd" fill="none"/></svg></button><button aria-label="주석"><svg width="15" height="17"><use href="#man" y="1" width="15" height="16"/></svg></button><button class="scale">1:1<i class="caret wide"></i></button></div>
    <div class="sg g5"><button aria-label="작업공간"><svg width="16" height="16"><circle cx="8" cy="8" r="4.500" stroke="#ddd" stroke-width="3" fill="none"/><path d="M8 0v3M8 13v3M0 8h3M13 8h3M2.300 2.300l2 2M11.700 11.700l2 2M13.700 2.300l-2 2M4.300 11.700l-2 2" stroke="#ddd" stroke-width="2.500"/></svg></button><i class="caret wide"></i></div>
    <div class="sg g6"><button aria-label="주석 감시"><svg width="16" height="16"><path d="M8 0v16M0 8h16" stroke="#ddd" stroke-width="1.500"/></svg></button></div>
    <div class="sg g6"><button aria-label="객체 분리"><svg width="16" height="16"><path d="M1 1h5v6H1z" stroke="#ddd" fill="none"/><circle cx="12" cy="6" r="3" stroke="#ddd" fill="none"/><path d="M7 10l3 5H4z" stroke="#ddd" fill="none"/></svg></button></div>
    <div class="sg g7"><button aria-label="전체 화면"><svg width="16" height="14"><path d="M.5 1.500h15v11H.5z" stroke="#ddd" fill="none"/><path d="M9 4h4v4zM3 6v4h4zM9 8l3-3M4 9l3-3" fill="#ddd" stroke="#ddd" stroke-width=".5"/></svg></button><button aria-label="사용자화"><svg width="16" height="14"><path d="M0 1h16M0 7h16M0 13h16" stroke="#e6e6e6" stroke-width="1.500"/></svg></button></div>
  </div>
</footer>
<script src="grid.js"></script>
</body>
</html>
```

FILE: styles.css
```css
* { box-sizing: border-box; }
html, body { height: 100%; }
body {
  margin: 0;
  display: flex;
  flex-direction: column;
  position: relative;
  overflow: hidden;
  background: #3a3a3a;
  border-left: 1px solid #2a77a0;
  border-right: 1px solid #6b8196;
  font: 13px/16px "Open Sans", "Noto Sans CJK KR", sans-serif;
  color: #f0f0f0;
}
body::after {
  content: "";
  flex: none;
  height: 2px;
  background: linear-gradient(90deg, #b9b9b9 67%, #1d63a5 67%);
}
button, input, select {
  font: inherit;
  color: inherit;
  background: none;
  border: 0;
  padding: 0;
  margin: 0;
}
button { white-space: nowrap; }
a { color: inherit; text-decoration: none; }
svg { display: block; flex: none; }
p, h1 { margin: 0; }
.defs { position: absolute; }

.caret {
  flex: none;
  width: 0;
  height: 0;
  border: 3px solid transparent;
  border-top-color: #f2f2f2;
  border-bottom: 0;
}
.caret.wide { border-width: 4px 4px 0; }
.caret.dark { border-width: 4px 4px 0; border-top-color: #333; }
.caret.gray { border-top-color: #999; }
.faded { opacity: .6; }

/* title bar */
.titlebar {
  flex: none;
  height: 32px;
  display: flex;
  align-items: flex-end;
  background: #fff;
  border-top: 1px solid #a0a0a0;
}
.quick, .info {
  height: 24px;
  display: flex;
  align-items: center;
  background: linear-gradient(#a2a2a2, #828282);
  border: 1px solid #5c5c5c;
  border-bottom: 0;
}
.quick { width: 303px; padding-left: 45px; }
.q { width: 24px; display: grid; place-items: center; }
.redo { margin: 0 -1px 0 9px; opacity: .6; }
.custom { margin-left: 8px; }
.title {
  flex: 1;
  display: flex;
  justify-content: center;
  gap: 24px;
  align-self: center;
  font-size: 12px;
  font-weight: 400;
  color: #1a1a1a;
}
.info { width: 447px; gap: 6px; padding-right: 4px; }
.expand { width: 7px; margin: 0 -4px 0 4px; }
.search {
  width: 180px;
  height: 22px;
  margin-right: -2px;
  padding: 0 4px;
  background: #747474;
  border: 1px solid #3c3c3c;
  font-size: 12px;
  font-style: italic;
}
.search::placeholder { color: #c8c8c8; opacity: 1; }
.login { flex: 1; display: flex; align-items: center; gap: 5px; margin: 0 8px 0 2px; }
.login .caret { margin-left: auto; }
.help { margin-left: 12px; }
.winctl { display: flex; align-self: stretch; margin-left: 27px; }
.winctl button { width: 45px; display: grid; place-items: center; padding-bottom: 2px; }

.appbtn {
  position: absolute;
  left: 0;
  top: 8px;
  width: 42px;
  height: 42px;
  display: flex;
  align-items: center;
  padding: 0 2px 6px 4px;
  gap: 2px;
  background: linear-gradient(#c9c9c9, #6d6d6d);
  border: 2px solid #161616;
}

.menubar {
  flex: none;
  height: 22px;
  display: flex;
  align-items: center;
  gap: 24px;
  padding: 0 4px 2px 55px;
  background: linear-gradient(#a9a9a9, #585858);
  border-top: 1px solid #333;
  border-bottom: 1px solid #2c2c2c;
  text-shadow: 0 1px 1px #555;
}
.docctl { margin-left: auto; display: flex; align-items: center; gap: 6px; }

.tabs {
  flex: none;
  height: 20px;
  display: flex;
  align-items: flex-end;
  gap: 20px;
  padding-left: 4px;
  background: #535353;
  border-bottom: 1px solid #2b2b2b;
  color: #c9c9c9;
}
.tabs button { height: 18px; padding-bottom: 2px; }
.tabs .on {
  width: 30px;
  margin-right: -9px;
  background: linear-gradient(#7d7d7d, #666);
  border: 1px solid #303030;
  border-bottom: 0;
  color: #fff;
}
.tabs .mini { display: flex; align-items: center; gap: 5px; margin-left: 12px; }

/* ribbon */
.ribbon {
  flex: none;
  height: 99px;
  display: flex;
  padding-left: 1px;
  background: #4a4a4a;
  border-bottom: 1px solid #8a8a8a;
}
.panel {
  flex: none;
  display: flex;
  flex-direction: column;
  background: #5d5d5d;
  border-right: 2px solid #414141;
}
.body { flex: 1; display: flex; padding: 3px 0 0 6px; }
.plabel {
  height: 18px;
  display: flex;
  align-items: center;
  justify-content: center;
  gap: 6px;
  margin: 0 1px 2px;
  background: #494949;
  color: #f4f4f4;
}
.bare { display: flex; align-items: center; gap: 7px; }
.big {
  width: 40px;
  display: flex;
  flex-direction: column;
  align-items: center;
  padding-top: 4px;
  line-height: 15px;
}
.big svg { margin-bottom: 1px; }
.big .caret { margin-top: 4px; }
.stack { display: flex; flex-direction: column; }
.stack.grow { flex: 1; }
.stack button { display: flex; align-items: center; height: 24px; gap: 6px; }
.row { display: flex; gap: 8px; }
.push { margin-left: 5px; }

.p-draw { width: 203px; }
.p-draw .body { padding-left: 2px; }
.p-draw .stack { margin-left: 2px; }
.p-draw .stack button { gap: 7px; }
.p-modify { width: 239px; }
.p-modify .body { gap: 13px; padding-left: 7px; }
.p-modify .stack.grow { flex: none; width: 74px; }
.p-annot { width: 168px; }
.p-annot .body { gap: 3px; padding-left: 4px; }
.p-annot .stack { margin-left: 1px; }
.p-annot .stack .caret { margin-left: 1px; }
.p-layer { width: 256px; }
.p-layer .big, .p-prop .big { line-height: 16px; }
.p-layer .body { gap: 6px; padding: 3px 1px 0 3px; }
.p-block { width: 138px; }
.p-block .body { padding-left: 1px; gap: 3px; }
.p-prop { width: 244px; }
.p-prop .body { padding-right: 1px; padding-left: 1px; }
.p-group { width: 68px; }
.p-group .body { padding-left: 1px; }
.p-group .stack button { width: 24px; justify-content: center; }
.p-util { width: 104px; }
.p-util .big { width: 66px; }
.p-util .stack { margin-left: 9px; }
.p-clip { width: 100px; }
.p-clip .big { width: 60px; }
.p-clip .stack { margin-left: 11px; }
.p-view { width: 50px; }
.p-view .body { padding-left: 5px; }

.combo {
  height: 22px;
  display: flex;
  align-items: center;
  gap: 5px;
  padding: 0 3px 0 5px;
  margin: 1px 0;
  background: linear-gradient(#5a5a5a, #6b6b6b);
  border: 1px solid #333;
}
.combo select { flex: 1; min-width: 0; appearance: none; height: 18px; }
.combo.layer { gap: 4px; margin-left: -4px; }
.swatch { width: 14px; height: 14px; background: #fff; border: 1px solid #222; }
.swatch.line { margin-top: 2px; }
.swatch.big-sw { width: 16px; height: 16px; margin: 0 4px 0 8px; border-color: #999; }
.combo.prop { padding-left: 3px; }
.combo.small { font-size: 12px; }
.rule { width: 64px; height: 1px; margin-right: -3px; background: #fff; }
.p-prop .icons { width: 16px; margin: 0 5px 0 0; }
.p-prop .plabel { justify-content: space-between; padding: 0 3px 0 96px; }
.p-view .plabel { gap: 7px; }
.stack .pressed { background: #5a7fb4; border: 1px solid #27415f; }

/* drawing tabs */
.files {
  flex: none;
  height: 29px;
  display: flex;
  align-items: flex-end;
  padding: 0 0 0 17px;
  background: #3a3a3a;
  border-bottom: 5px solid #606060;
}
.ftab {
  position: relative;
  width: 128px;
  height: 22px;
  display: flex;
  align-items: center;
  justify-content: space-between;
  padding: 2px 15px 0;
  color: #bdbdbd;
}
.ftab.on { color: #fff; z-index: 1; padding: 2px 17px 0 10px; font-size: 12px; }
.ftab > span, .ftab > svg, .layouts span { position: relative; }
.ftab .shape, .layouts .shape { position: absolute; left: 0; top: 0; }
.ftab.on .shape { left: -4px; }
.fadd { margin: 0 0 2px 1px; }

/* drawing area */
.canvas { flex: 1; min-height: 0; position: relative; background: #212830; overflow: hidden; }
.drawing { position: absolute; inset: 0 0 0 -1px; width: calc(100% + 1px); height: 100%; }
.sel { fill: #195c30; }
#minor { stroke: #a0b0e0; stroke-opacity: .04; }
#major { stroke: #a0b0e0; stroke-opacity: .13; }
.axis { stroke: #227022; stroke-width: 1; shape-rendering: crispEdges; }
.ghost { fill: none; stroke: #fff; stroke-opacity: .18; stroke-width: 1.3; }
.dash { fill: none; stroke: #f4f4f4; stroke-width: 1.3; stroke-dasharray: 4 2; }
.ucs { fill: none; stroke: #f4f4f4; }
.ucs text { fill: #f4f4f4; stroke: none; font-size: 19px; font-weight: 300; }
.vplabel { position: absolute; left: 3px; top: 5px; }
.dyn {
  position: absolute;
  left: 858px;
  top: 214px;
  display: flex;
  align-items: center;
  gap: 20px;
  padding: 0 3px 5px 5px;
  background: #9b9b9b;
  border: 1px solid #000;
  color: #000;
}
.dyn svg { margin-top: 7px; }
.cube { position: absolute; right: 14px; top: 13px; overflow: visible; }
.cube text { font-size: 17px; fill: #a4a7aa; text-anchor: middle; }
.cube .face { font-size: 12px; fill: #454b54; }
.wcs {
  position: absolute;
  right: 53px;
  top: 157px;
  width: 48px;
  height: 17px;
  display: flex;
  align-items: center;
  justify-content: space-between;
  padding: 0 4px;
  background: #9496a4;
  border-radius: 3px;
  color: #3b3e48;
  font: 11px/15px "Liberation Sans", sans-serif;
}
.navbar { position: absolute; right: 4px; top: 200px; background: #5f6467; border-radius: 3px; box-shadow: 0 0 2px #111; }

.cmd {
  position: absolute;
  left: 20%;
  width: 60%;
  bottom: 0;
  height: 50px;
  display: flex;
  margin-left: -1px;
  border: 1px solid #7a7a7a;
  font-family: "DejaVu Sans Mono", "Noto Sans CJK KR", monospace;
  color: #000;
}
.grip {
  width: 22px;
  flex: none;
  display: flex;
  flex-direction: column;
  align-items: center;
  justify-content: space-between;
  padding: 4px 0 0;
  background: linear-gradient(#8a8a8a, #3c3c3c);
}
.lines { flex: 1; display: flex; flex-direction: column; font-size: 13px; }
.hist { height: 26px; padding: 8px 0 0 3px; background: #c8c8c8; border-bottom: 1px solid #777; }
.entry { flex: 1; display: flex; align-items: center; gap: 2px; padding: 0 3px 0 4px; background: #fff; }
.entry label { margin-left: 6px; white-space: nowrap; }
.entry input { flex: 1; min-width: 0; outline: 0; }
.entry b { font-size: 11px; }
.opt { background: #d3d3d3; border-radius: 3px; padding: 2px 1px; }
.opt em { font-style: normal; color: #1414d2; }

/* bottom bar */
.bottom { flex: none; height: 29px; display: flex; align-items: flex-start; border-top: 1px solid #555; }
.layouts { display: flex; padding-left: 9px; color: #b4b4b4; }
.layouts button { position: relative; width: 52px; height: 18px; padding-bottom: 3px; }
.layouts .on { color: #fff; font-weight: 700; z-index: 1; }
.layouts .ladd { padding: 0; margin-left: 5px; width: 24px; }
.status { margin-left: auto; display: flex; gap: 1px; color: #e4e4e4; }
.sg { display: flex; align-items: center; justify-content: space-between; height: 26px; background: #4f4f4f; border: 1px solid #808080; }
.act { height: 22px; width: 22px; display: grid; place-items: center; background: #5e8fc6; color: #fff; }
.g1 { width: 29px; justify-content: center; color: #fff; }
.g2 { width: 65px; padding: 0 3px 0 1px; }
.g3 { width: 167px; padding: 0 4px 0 3px; }
.g4 { width: 106px; padding: 0 4px 0 1px; }
.scale { display: flex; align-items: center; gap: 4px; font-size: 12px; }
.g5 { width: 41px; padding: 0 4px; }
.g6 { width: 26px; justify-content: center; }
.g7 { width: 51px; padding: 0 5px; }
```

FILE: grid.js
```js
// Draws the drafting grid: five minor cells to one major cell.
var MAJOR = 44.3;
var ORIGIN_X = 278.5;
var ORIGIN_Y = 646.5;

function drawGrid() {
  var box = document.getElementById("drawing").getBoundingClientRect();
  var minor = "";
  var major = "";
  var step = MAJOR / 5;
  function lines(origin, length, make) {
    var first = -Math.floor(origin / step);
    for (var k = first; origin + k * step < length; k++) {
      var pos = Math.floor(origin + k * step) + 0.5;
      if (k % 5 === 0) { major += make(pos); } else { minor += make(pos); }
    }
  }
  lines(ORIGIN_X, box.width, function (p) { return "M" + p + " 0V" + box.height; });
  lines(ORIGIN_Y, box.height, function (p) { return "M0 " + p + "H" + box.width; });
  document.getElementById("minor").setAttribute("d", minor);
  document.getElementById("major").setAttribute("d", major);
}

drawGrid();
window.addEventListener("resize", drawGrid);
```
